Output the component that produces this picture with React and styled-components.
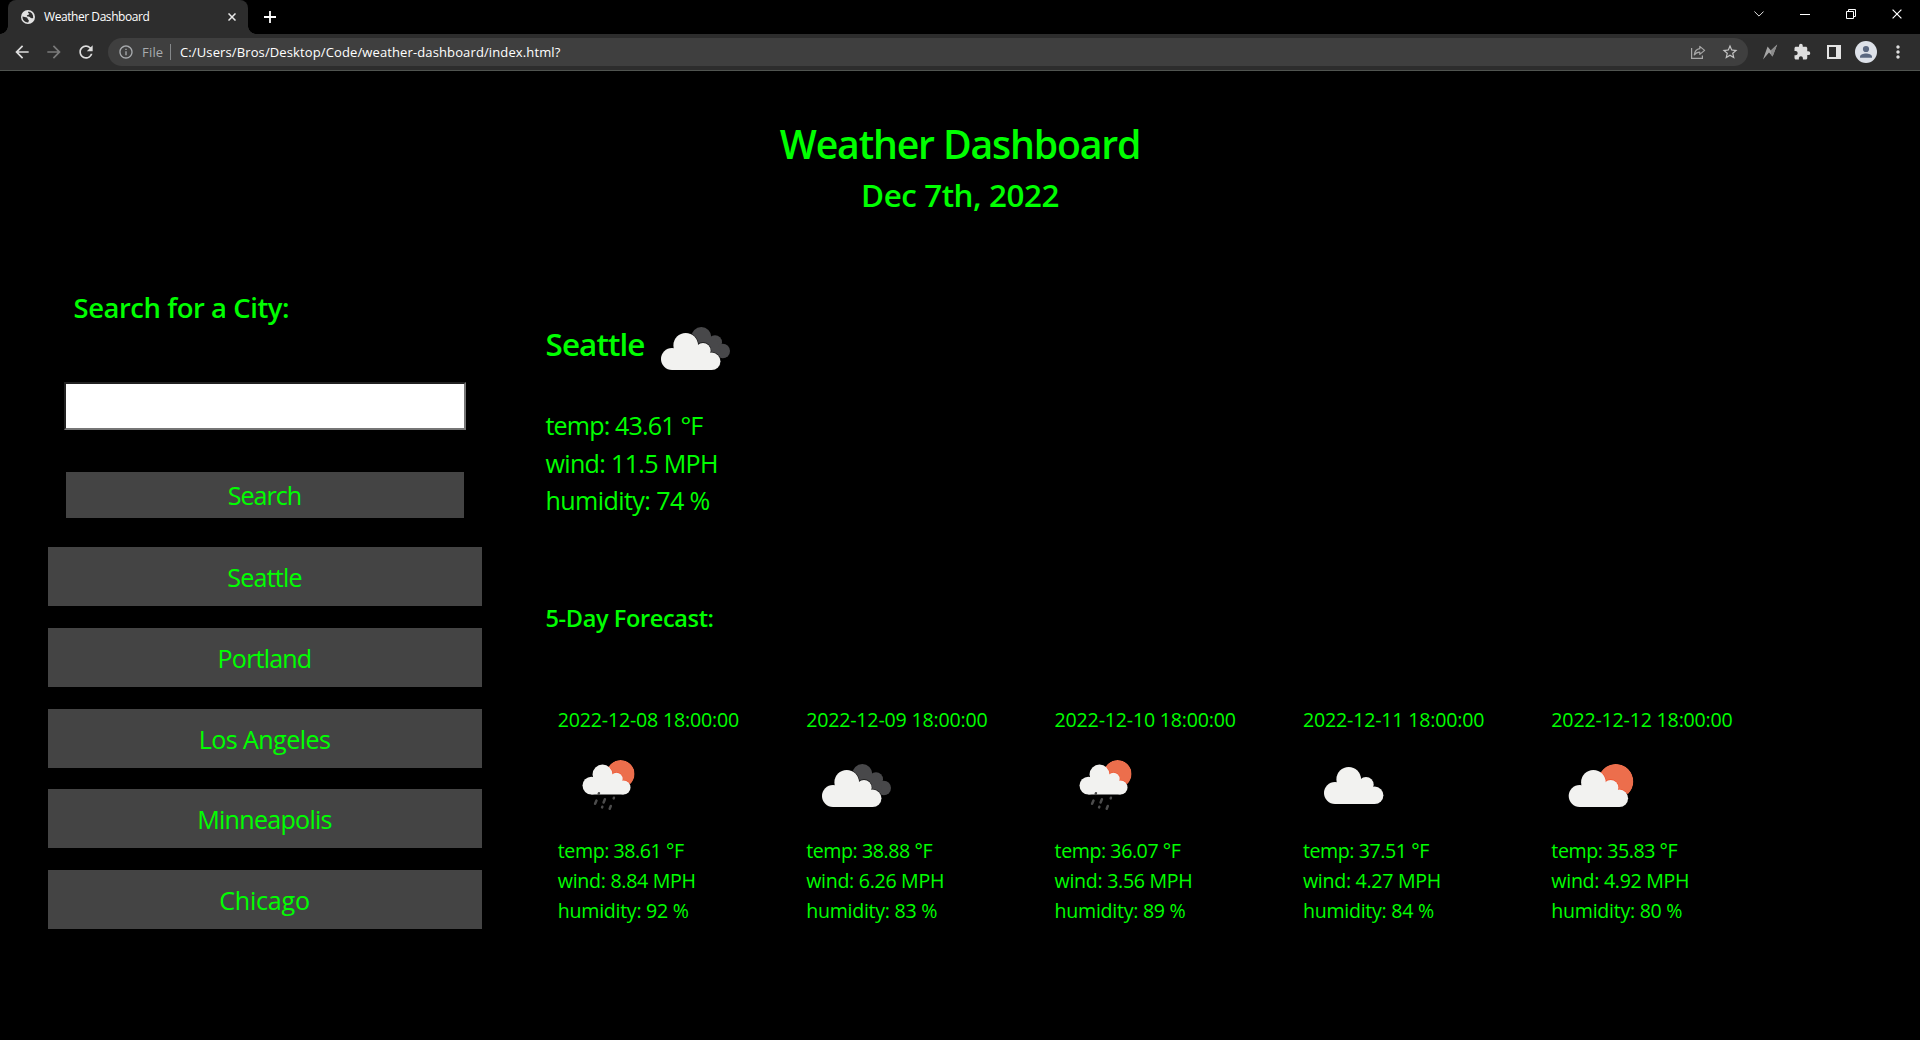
import React from 'react';
import styled, { createGlobalStyle, css } from 'styled-components';
import {
  MdArrowBack,
  MdArrowForward,
  MdRefresh,
  MdInfoOutline,
  MdExtension,
  MdStarOutline,
  MdMoreVert,
} from 'react-icons/md';

const GlobalStyle = createGlobalStyle`
  * { box-sizing: border-box; }
  html, body { margin: 0; background: #000; }
  body {
    font-family: "Open Sans", "Noto Sans", sans-serif;
    color: #0f0;
    overflow: hidden;
  }
  h1, h2, h3, p, ul { margin: 0; padding: 0; }
  svg { display: block; flex: none; }
`;

const Page = styled.div`
  width: 1920px;
  height: 1040px;
  display: flex;
  flex-direction: column;
`;

/* ---------- browser chrome ---------- */

const TabStrip = styled.div`
  height: 34px;
  flex: none;
  display: flex;
  align-items: stretch;
  padding-left: 8px;
  background: #000;
`;

const corner = css`
  content: '';
  position: absolute;
  bottom: 0;
  width: 8px;
  height: 8px;
`;

const Tab = styled.div`
  position: relative;
  width: 240px;
  display: flex;
  align-items: center;
  padding: 0 12px 0 13px;
  border-radius: 8px 8px 0 0;
  background: #2d2d2d;
  &::before {
    ${corner}
    left: -8px;
    background: radial-gradient(circle at 0 0, #000 7.5px, #2d2d2d 8px);
  }
  &::after {
    ${corner}
    right: -8px;
    background: radial-gradient(circle at 100% 0, #000 7.5px, #2d2d2d 8px);
  }
`;

const TabTitle = styled.span`
  flex: 1;
  margin-left: 9px;
  font-size: 12px;
  line-height: 34px;
  letter-spacing: -0.44px;
  color: #fff;
  white-space: nowrap;
`;

const NewTab = styled.div`
  width: 28px;
  margin-left: 8px;
  display: grid;
  place-items: center;
`;

const WindowControls = styled.div`
  margin-left: auto;
  display: flex;
  height: 28px;
`;

const WindowButton = styled.div`
  width: 46px;
  display: grid;
  place-items: center;
`;

const Toolbar = styled.div`
  height: 37px;
  flex: none;
  display: flex;
  align-items: center;
  padding: 0 6px;
  background: #2d2d2d;
  border-bottom: 1px solid #505450;
`;

const Slot = styled.div`
  width: 32px;
  height: 28px;
  display: grid;
  place-items: center;
  color: ${(p) => (p.$dim ? '#7a7a7a' : '#dedede')};
`;

const Omnibox = styled.div`
  flex: 1;
  height: 28px;
  margin: 0 6px;
  padding: 0 2px 0 10px;
  border-radius: 14px;
  background: #3f3f3f;
  display: flex;
  align-items: center;
  color: #a8abae;
  font-size: 13px;
  line-height: 28px;
`;

const Scheme = styled.span`
  width: 28px;
  margin-left: 8px;
  letter-spacing: 0.2px;
`;

const Divider = styled.span`
  width: 1px;
  height: 16px;
  margin-right: 9px;
  background: #85888a;
`;

const Url = styled.span`
  flex: 1;
  color: #fff;
  letter-spacing: 0.12px;
`;

const GlobeIcon = () => (
  <svg width="14" height="14" viewBox="0 0 14 14">
    <circle cx="7" cy="7" r="7" fill="#e2e2e2" />
    <path
      d="M1.500 6.600 3.800 7.100c1.800.2 2.700.6 2.800 1.500.1.900.7 1.200 1.200 1.700.3.700-.3 1.300-.6 2.200C4 12.600 1.300 10.300 1.500 6.600zM7.600 1.600C6.600 2.500 7 3.300 8.200 3.600c.2.900-.5 1.300-1.500 1.400-.9.200-1.100 1-.4 1.400 1.500.1 2.700.3 3.200 1.400.6.600 1.500.6 2.700.2.200-3.500-1.700-5.800-4.600-6.400z"
      fill="#2d2d2d"
    />
  </svg>
);

const CrossIcon = ({ size, stroke = 1.2, color = '#fff' }) => (
  <svg width={size} height={size} viewBox="0 0 10 10">
    <path d="M.6.6 9.400 9.400M9.400.6.6 9.400" stroke={color} strokeWidth={stroke} fill="none" />
  </svg>
);

const ShareIcon = () => (
  <svg width="16" height="16" viewBox="0 0 16 16" fill="none" stroke="#a8a8a8" strokeWidth="1.200">
    <path d="M1.600 4v10.400h10.800V11.500" />
    <path d="M9.800 2.400 14.600 6.400 9.800 10.400V8.100C7.300 8.100 5.700 8.900 4.300 10.900 4.700 7.600 6.300 5.200 9.800 4.700z" strokeLinejoin="round" />
  </svg>
);

const BoltIcon = () => (
  <svg width="16" height="16" viewBox="0 0 16 16">
    <path d="M1 15.400 5.600 2.600 8.800 6.600 15.200.6 10.600 12.600 7 8.600z" fill="#a6a6a6" />
    <path d="M8.800 6.600 15.200.6 10.600 12.600 9 10.800z" fill="#8a8a8a" />
  </svg>
);

const SidePanelIcon = () => (
  <svg width="14" height="14" viewBox="0 0 14 14">
    <path d="M0 0h14v14H0zM2 2v10h7V2z" fill="#e4e4e4" fillRule="evenodd" />
  </svg>
);

const AvatarIcon = () => (
  <svg width="22" height="22" viewBox="0 0 22 22">
    <circle cx="11" cy="11" r="11" fill="#dde1e8" />
    <circle cx="11" cy="8" r="3.100" fill="#5b6880" />
    <path d="M5 16.700v-1.200c0-2 3.500-3.100 6-3.100s6 1.100 6 3.100v1.200z" fill="#5b6880" />
  </svg>
);

function BrowserChrome() {
  return (
    <>
      <TabStrip>
        <Tab>
          <GlobeIcon />
          <TabTitle>Weather Dashboard</TabTitle>
          <CrossIcon size={8} stroke={1.900} color="#e8e8e8" />
        </Tab>
        <NewTab>
          <svg width="12" height="12" viewBox="0 0 12 12">
            <path d="M6 0v12M0 6h12" stroke="#fff" strokeWidth="1.800" />
          </svg>
        </NewTab>
        <WindowControls>
          <WindowButton>
            <svg width="10" height="6" viewBox="0 0 10 6">
              <path d="M.4.5 5 5.100 9.600.5" stroke="#e0e0e0" fill="none" />
            </svg>
          </WindowButton>
          <WindowButton>
            <svg width="10" height="1" viewBox="0 0 10 1">
              <rect width="10" height="1" fill="#fff" />
            </svg>
          </WindowButton>
          <WindowButton>
            <svg width="10" height="10" viewBox="0 0 10 10">
              <path d="M.5 2.500h7v7h-7zM2.500 2.500v-2h7v7h-2" stroke="#fff" fill="none" />
            </svg>
          </WindowButton>
          <WindowButton>
            <CrossIcon size={10} />
          </WindowButton>
        </WindowControls>
      </TabStrip>
      <Toolbar>
        <Slot><MdArrowBack size={20} /></Slot>
        <Slot $dim><MdArrowForward size={20} /></Slot>
        <Slot><MdRefresh size={20} /></Slot>
        <Omnibox>
          <MdInfoOutline size={16} />
          <Scheme>File</Scheme>
          <Divider />
          <Url>C:/Users/Bros/Desktop/Code/weather-dashboard/index.html?</Url>
          <Slot><ShareIcon /></Slot>
          <Slot><MdStarOutline size={18} color="#c4c4c4" /></Slot>
        </Omnibox>
        <Slot><BoltIcon /></Slot>
        <Slot><MdExtension size={18} /></Slot>
        <Slot><SidePanelIcon /></Slot>
        <Slot><AvatarIcon /></Slot>
        <Slot><MdMoreVert size={20} /></Slot>
      </Toolbar>
    </>
  );
}

/* ---------- weather icons ---------- */

const CloudShape = (props) => (
  <g {...props}>
    <circle cx="27" cy="62" r="11" />
    <circle cx="40.700" cy="48.300" r="12.300" />
    <circle cx="58" cy="53.700" r="7.700" />
    <circle cx="66.700" cy="64.300" r="8.700" />
    <path d="M27 73V52h31l8.700 6V73z" />
  </g>
);

const Cloud = (props) => <CloudShape fill="#f2f2f0" {...props} />;

/* A sun disc with a redder rim where the cloud overlaps it. */
const SunAndCloud = ({ id, cx, cy, r, transform }) => (
  <>
    <clipPath id={id}>
      <path d={`M${cx - r} ${cy}A${r} ${r} 0 0 1 ${cx + r} ${cy}Q${cx + r} ${cy + r * 0.42} ${cx + r * 0.7} ${cy + r * 0.71}L${cx - r} ${cy}z`} />
    </clipPath>
    <g clipPath={`url(#${id})`}>
      <circle cx={cx} cy={cy} r={r} fill="#ec6e4c" />
      <CloudShape fill="#f0532f" stroke="#f0532f" strokeWidth="1.300" transform={transform} />
    </g>
    <Cloud transform={transform} />
  </>
);

const skies = {
  broken: () => (
    <>
      <g fill="#48484a">
        <circle cx="56.300" cy="40" r="10" />
        <circle cx="70" cy="45.300" r="7" />
        <circle cx="77.700" cy="54" r="7.300" />
        <path d="M50 40h20l6 14-4 6-20-6z" />
      </g>
      <CloudShape fill="#141414" stroke="#141414" strokeWidth="1.300" clipPath="inset(0 0 2px 30px)" />
      <Cloud />
    </>
  ),
  rain: (id) => (
    <>
      <SunAndCloud id={id} cx={62.600} cy={40} r={14} transform="translate(11.600 1.500) scale(.808)" />
      <path
        d="M40.900 59.300l-.2.6M38.500 66.600l-1.400 3.200M46.900 65.200l-1.300 3.300M55.900 63.800l-.2.6M44.300 72.800l-.2.600M52.800 72l-1.100 2.800"
        stroke="#4c4c4c"
        strokeWidth="2.500"
        strokeLinecap="round"
      />
    </>
  ),
  scattered: () => <Cloud transform="translate(5 -3)" />,
  few: (id) => <SunAndCloud id={id} cx={64.800} cy={47.500} r={17.600} transform="translate(1.700 0)" />,
};

const WeatherIcon = ({ sky }) => {
  const id = React.useId().replace(/[^a-zA-Z0-9]/g, '');
  return (
    <svg width="100" height="100" viewBox="0 0 100 100">{skies[sky](`sun${id}`)}</svg>
  );
};

/* ---------- dashboard ---------- */

const Header = styled.header`
  padding-top: 44px;
  text-align: center;
  font-weight: 600;
  flex: none;
`;

const Title = styled.h1`
  font-size: 39.2px;
  font-weight: 600;
  line-height: 58px;
  letter-spacing: -1.16px;
`;

const Today = styled.h2`
  font-size: 31.4px;
  font-weight: 600;
  line-height: 44px;
  letter-spacing: -0.45px;
`;

const Main = styled.main`
  display: grid;
  grid-template-columns: 434px 1fr;
  column-gap: 63.5px;
  padding-left: 48px;
`;

const Sidebar = styled.aside`
  display: flex;
  flex-direction: column;
  padding-top: 70px;
`;

const SearchLabel = styled.h3`
  padding-left: 25.5px;
  font-size: 27.4px;
  font-weight: 600;
  line-height: 42px;
  letter-spacing: -0.42px;
`;

const SearchInput = styled.input`
  height: 48px;
  margin: 53px 16px 0;
  padding: 0 8px;
  border: 2px solid;
  border-color: #222 #767676 #767676 #222;
  border-radius: 0;
  background: #fff;
  outline: none;
`;

const buttonBase = css`
  border: 0;
  padding: 0 1px 0 0;
  background: #444;
  color: #0f0;
  font-family: inherit;
  font-size: 25.1px;
  text-align: center;
  letter-spacing: ${(p) => p.$spacing}px;
`;

const SearchButton = styled.button`
  ${buttonBase}
  height: 46px;
  margin: 42px 18px 0;
  line-height: 46px;
`;

const CityList = styled.div`
  display: flex;
  flex-direction: column;
  gap: 21.75px;
  margin-top: 29px;
`;

const CityButton = styled.button`
  ${buttonBase}
  height: 59px;
  padding-top: 1px;
  line-height: 58px;
`;

const Report = styled.section`
  padding-top: 80px;
`;

const CurrentHeading = styled.div`
  height: 100px;
  display: flex;
  align-items: center;
`;

const CityName = styled.h2`
  width: 99.5px;
  padding-bottom: 6px;
  font-size: 31.4px;
  font-weight: 600;
  line-height: 44px;
  letter-spacing: -0.88px;
`;

const CurrentStats = styled.div`
  margin-top: 10px;
  font-size: 25.1px;
  line-height: 37.5px;
`;

const Stat = styled.p`
  white-space: nowrap;
  letter-spacing: ${(p) => p.$spacing}px;
`;

const ForecastTitle = styled.h3`
  margin-top: 80.5px;
  font-size: 23.5px;
  font-weight: 600;
  line-height: 36px;
  letter-spacing: -0.36px;
`;

const Forecast = styled.div`
  display: grid;
  grid-template-columns: repeat(5, 248.4px);
  margin: 70px 0 0 12.3px;
`;

const Day = styled.article`
  font-size: 19.6px;
  line-height: 30px;
`;

const DayDate = styled.p`
  line-height: 28px;
  letter-spacing: -0.19px;
`;

const DayStats = styled.div`
  padding-top: 1.6px;
`;

const cities = [
  ['Seattle', -0.78],
  ['Portland', -0.83],
  ['Los Angeles', -0.58],
  ['Minneapolis', -0.75],
  ['Chicago', -0.23],
];

const days = [
  { date: '2022-12-08', sky: 'rain', temp: '38.61', wind: '8.84', humidity: 92 },
  { date: '2022-12-09', sky: 'broken', temp: '38.88', wind: '6.26', humidity: 83 },
  { date: '2022-12-10', sky: 'rain', temp: '36.07', wind: '3.56', humidity: 89 },
  { date: '2022-12-11', sky: 'scattered', temp: '37.51', wind: '4.27', humidity: 84 },
  { date: '2022-12-12', sky: 'few', temp: '35.83', wind: '4.92', humidity: 80 },
];

export default function App() {
  return (
    <Page>
      <GlobalStyle />
      <BrowserChrome />
      <Header>
        <Title>Weather Dashboard</Title>
        <Today>Dec 7th, 2022</Today>
      </Header>
      <Main>
        <Sidebar>
          <SearchLabel>Search for a City:</SearchLabel>
          <SearchInput type="text" />
          <SearchButton $spacing={-1}>Search</SearchButton>
          <CityList>
            {cities.map(([name, spacing]) => (
              <CityButton key={name} $spacing={spacing}>{name}</CityButton>
            ))}
          </CityList>
        </Sidebar>
        <Report>
          <CurrentHeading>
            <CityName>Seattle</CityName>
            <WeatherIcon sky="broken" />
          </CurrentHeading>
          <CurrentStats>
            <Stat $spacing={-0.86}>temp: 43.61 °F</Stat>
            <Stat $spacing={-0.69}>wind: 11.5 MPH</Stat>
            <Stat $spacing={-0.6}>humidity: 74 %</Stat>
          </CurrentStats>
          <ForecastTitle>5-Day Forecast:</ForecastTitle>
          <Forecast>
            {days.map((d) => (
              <Day key={d.date}>
                <DayDate>{d.date} 18:00:00</DayDate>
                <WeatherIcon sky={d.sky} />
                <DayStats>
                  <Stat $spacing={-0.43}>temp: {d.temp} °F</Stat>
                  <Stat $spacing={-0.3}>wind: {d.wind} MPH</Stat>
                  <Stat $spacing={-0.28}>humidity: {d.humidity} %</Stat>
                </DayStats>
              </Day>
            ))}
          </Forecast>
        </Report>
      </Main>
    </Page>
  );
}
